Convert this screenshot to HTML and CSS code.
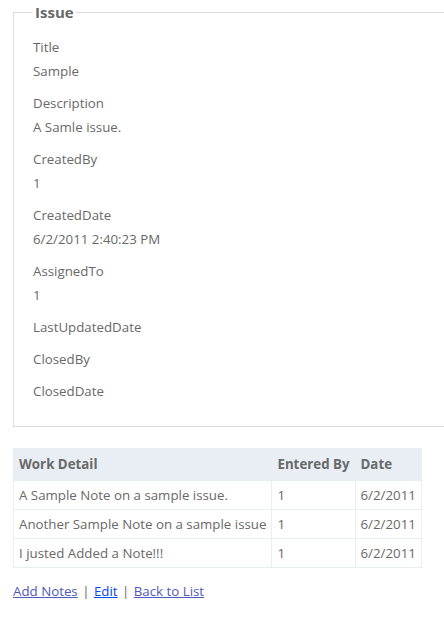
FILE: index.html
```html
<!DOCTYPE html>
<html lang="en">
<head>
    <meta charset="UTF-8">
    <meta name="viewport" content="width=device-width, initial-scale=1.0">
    <title>Details</title>
    <link rel="stylesheet" href="styles.css">
</head>
<body>
    <fieldset>
        <legend>Issue</legend>

        <div class="display-label">Title</div>
        <div class="display-field">Sample</div>

        <div class="display-label">Description</div>
        <div class="display-field">A Samle issue.</div>

        <div class="display-label">CreatedBy</div>
        <div class="display-field">1</div>

        <div class="display-label">CreatedDate</div>
        <div class="display-field">6/2/2011 2:40:23 PM</div>

        <div class="display-label">AssignedTo</div>
        <div class="display-field">1</div>

        <div class="display-label">LastUpdatedDate</div>
        <div class="display-field"></div>

        <div class="display-label">ClosedBy</div>
        <div class="display-field"></div>

        <div class="display-label">ClosedDate</div>
        <div class="display-field"></div>
    </fieldset>

    <table>
        <tr>
            <th>Work Detail</th>
            <th>Entered By</th>
            <th>Date</th>
        </tr>
        <tr>
            <td>A Sample Note on a sample issue.</td>
            <td>1</td>
            <td>6/2/2011</td>
        </tr>
        <tr>
            <td>Another Sample Note on a sample issue</td>
            <td>1</td>
            <td>6/2/2011</td>
        </tr>
        <tr>
            <td>I justed Added a Note!!!</td>
            <td>1</td>
            <td>6/2/2011</td>
        </tr>
    </table>

    <p class="actions">
        <a href="#" class="visited">Add Notes</a> |
        <a href="#">Edit</a> |
        <a href="#" class="visited">Back to List</a>
    </p>
</body>
</html>
```

FILE: styles.css
```css
body {
    font-family: "Open Sans", "Noto Sans", sans-serif;
    font-size: 13.3px;
    line-height: 18px;
    color: #696969;
    background-color: #fff;
    margin: 0;
    padding: 2px 0 0 13px;
}
/* the box runs on past the right side of the page */
fieldset {
    border: 1px solid #ddd;
    border-right: none;
    padding: 2px 19px 20px 19px;
    margin: 0 0 21px 0;
}
legend {
    font-size: 15px;
    line-height: 20px;
    font-weight: bold;
    padding: 0 2px;
}
.display-label {
    margin: 14px 0 0 0;
}
.display-field {
    margin: 6px 0 0 0;
}
table {
    border: solid 1px #e8eef4;
    border-collapse: collapse;
}
table th {
    padding: 6px 5px 7px 5px;
    text-align: left;
    background-color: #e8eef4;
    border: solid 1px #e8eef4;
}
table td {
    padding: 5px;
    border: solid 1px #e8eef4;
}
.actions {
    margin: 14px 0;
}
.actions a {
    margin: 0 1px;
}
.actions a:first-child {
    margin-left: 0;
}
a {
    color: #034af3;
    text-decoration: underline;
}
a.visited {
    color: #505abc;
}
```
